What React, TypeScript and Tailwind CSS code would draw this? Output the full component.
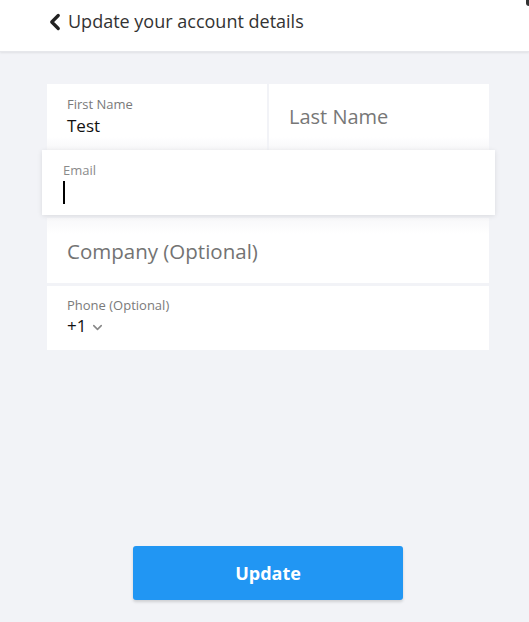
import { ChevronLeft, ChevronDown } from "lucide-react";

export default function App() {
    return (
        <div className="h-[622px] w-[529px] bg-[#f2f3f7] flex flex-col overflow-hidden font-['Open_Sans','Noto_Sans',sans-serif] relative">
            {/* header */}
            <div className="h-[52px] bg-white shadow-[0_1px_2px_rgba(0,0,0,0.08)] border-b border-[#e6e7eb] flex items-start pt-[10px] pl-[42px] relative z-10">
                <ChevronLeft className="text-[#222] -mt-[1px]" size={26} strokeWidth={3} />
                <span className="text-[18px] text-[#333] leading-[22px]">Update your account details</span>
                <div className="absolute right-0 top-0 w-[3px] h-[6px] bg-[#333] rounded-bl-sm" />
            </div>

            {/* form */}
            <div className="ml-[47px] w-[442px] mt-[32px] flex flex-col">
                <div className="flex gap-[2px] h-[66px]">
                    <div className="flex-1 bg-gradient-to-b from-white from-80% to-[#f7f7f9] pl-[20px] pt-[11px]">
                        <div className="text-[13px] text-[#7a7a7a] leading-[18px]">First Name</div>
                        <div className="text-[17px] text-[#111] leading-[24px] mt-[1px]">Test</div>
                    </div>
                    <div className="flex-1 bg-gradient-to-b from-white from-80% to-[#f7f7f9] pl-[20px] flex items-center">
                        <span className="text-[20px] text-[#777] -mt-[1px]">Last Name</span>
                    </div>
                </div>

                <div className="ml-[-5px] mr-[-6px] h-[65px] bg-white shadow-[0_1px_5px_rgba(0,0,0,0.1)] pl-[21px] pt-[11px] relative z-10">
                    <div className="text-[13px] text-[#8a8a8a] leading-[18px]">Email</div>
                    <div className="w-[2px] h-[23px] bg-black mt-[2px]" />
                </div>

                <div className="mt-[3px] h-[65px] bg-gradient-to-b from-[#f8f8fa] via-white via-25% to-white pl-[20px] flex items-center">
                    <span className="text-[20.5px] text-[#737373] mt-[1px]">Company (Optional)</span>
                </div>

                <div className="mt-[3px] h-[64px] bg-white pl-[20px] pt-[10px]">
                    <div className="text-[13px] text-[#7a7a7a] leading-[18px]">Phone (Optional)</div>
                    <div className="flex items-center">
                        <span className="text-[17px] text-[#111] leading-[24px]">+1</span>
                        <ChevronDown className="text-[#888] ml-[4px] mt-[2px]" size={15} strokeWidth={2.5} />
                    </div>
                </div>
            </div>

            {/* button */}
            <div className="ml-[47px] w-[442px] mt-[196px] flex justify-center">
                <button className="w-[270px] h-[54px] bg-[#2196f3] rounded-[3px] shadow-[0_2px_3px_rgba(0,0,0,0.15)] text-white text-[18px] font-bold">
                    Update
                </button>
            </div>
        </div>
    );
}
